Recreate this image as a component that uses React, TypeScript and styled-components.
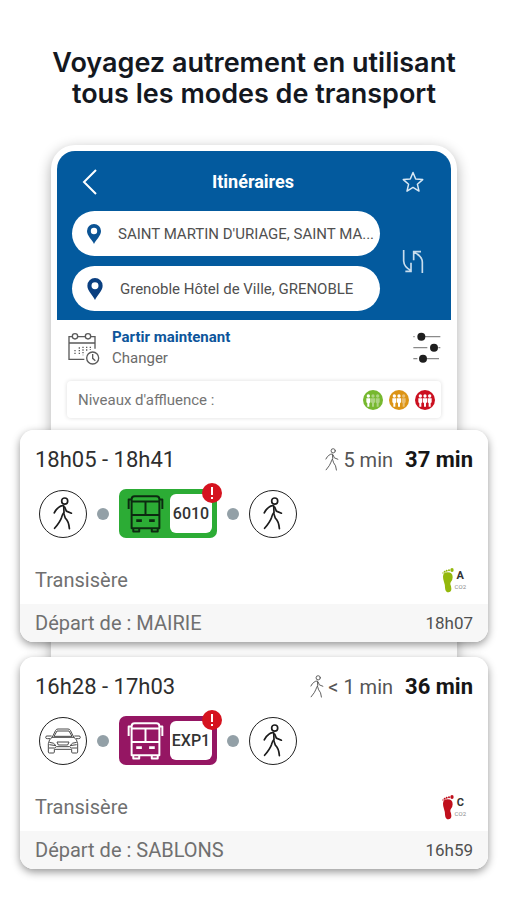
import React from "react";
import styled, { createGlobalStyle } from "styled-components";

const GlobalStyle = createGlobalStyle`
  *, *::before, *::after { box-sizing: border-box; }
  body {
    margin: 0;
    background: #fff;
    font-family: Roboto, "Liberation Sans", sans-serif;
    color: #222;
  }
  h1, h2, p, ul, ol { margin: 0; padding: 0; }
  ul, ol { list-style: none; }
  button { font: inherit; border: 0; background: none; padding: 0; cursor: pointer; }
  svg { display: block; flex: none; }
`;

const Page = styled.main`
  padding: 47px 18px 30px 20px;
`;

const Headline = styled.h1`
  font: 600 27px/31px Inter, "Liberation Sans", sans-serif;
  color: #14181f;
  text-align: center;
  text-wrap: balance;
`;

const Phone = styled.section`
  margin: 36px 31px 0;
  padding: 6px 6px 340px;
  border-radius: 24px;
  background: #fff;
  box-shadow: 0 4px 14px rgba(0, 0, 0, 0.32);
`;

const SearchHeader = styled.header`
  padding: 10px 27px 9px 15px;
  border-radius: 18px 18px 0 0;
  background: #035a9e;
  color: #fff;
`;

const TitleBar = styled.div`
  display: flex;
  align-items: center;
  justify-content: space-between;
  height: 42px;
  padding-left: 10px;
`;

const ScreenTitle = styled.h2`
  font-size: 18px;
  font-weight: 700;
  line-height: 24px;
`;

const IconButton = styled.button`
  display: flex;
  min-width: 22px;
  color: #fff;
`;

const SearchRow = styled.div`
  display: flex;
  align-items: center;
  gap: 22px;
  margin-top: 8px;
`;

const Fields = styled.div`
  flex: 1;
  min-width: 0;
  display: grid;
  gap: 10px;
`;

const Field = styled.label`
  display: flex;
  align-items: center;
  gap: 16px;
  height: 45px;
  padding: 0 2px 0 14px;
  border-radius: 23px;
  background: #fff;
`;

const FieldInput = styled.input`
  flex: 1;
  min-width: 0;
  padding: 0;
  border: 0;
  outline: 0;
  background: none;
  font: 400 15px/24px Roboto, "Liberation Sans", sans-serif;
  color: #505050;
  text-overflow: ellipsis;
`;

const OptionsRow = styled.div`
  display: flex;
  align-items: center;
  justify-content: space-between;
  padding: 7px 10px 0 11px;
`;

const DepartureButton = styled.button`
  display: flex;
  align-items: center;
  gap: 12px;
  text-align: left;
`;

const DepartureText = styled.span`
  display: grid;
  font-size: 15px;
  line-height: 21px;
  color: #6a6a6a;

  strong { color: #0d559b; font-weight: 700; }
`;

const CrowdBox = styled.div`
  display: flex;
  align-items: center;
  justify-content: space-between;
  height: 37px;
  margin: 12px 10px 0;
  padding: 0 6px 0 11px;
  border-radius: 4px;
  box-shadow: 0 0 4px rgba(0, 0, 0, 0.14);
  font-size: 15px;
  color: #747474;
`;

const CrowdLevels = styled.ul`
  display: flex;
  gap: 6px;
`;

const Results = styled.section`
  display: grid;
  gap: 15px;
  margin-top: -328px;
`;

const Card = styled.article`
  position: relative;
  border-radius: 14px;
  overflow: hidden;
  background: #fff;
`;

const CardShadow = styled.div`
  border-radius: 14px;
  box-shadow: 0 3px 9px rgba(0, 0, 0, 0.42);
`;

const CardHead = styled.div`
  display: flex;
  align-items: center;
  justify-content: space-between;
  height: 59px;
  padding: 0 15px;
  font-size: 22px;
  color: #2e2e2e;
`;

const Durations = styled.div`
  display: flex;
  align-items: center;
  gap: 4px;
  font-size: 20px;
  color: #555;
`;

const Total = styled.strong`
  margin-left: 8px;
  font-size: 22px;
  font-weight: 700;
  color: #161616;
`;

const Steps = styled.ol`
  display: flex;
  align-items: center;
  gap: 10px;
  padding: 0 19px;
`;

const ModeCircle = styled.li`
  display: grid;
  place-items: center;
  width: 48px;
  height: 48px;
  border: 1px solid #222;
  border-radius: 50%;
  color: #1c1c1c;
`;

const Dot = styled.li`
  width: 12px;
  height: 12px;
  border-radius: 50%;
  background: #93a0a7;
`;

const LineBadge = styled.li<{ $color: string; $ink: string }>`
  position: relative;
  display: flex;
  align-items: center;
  justify-content: space-between;
  width: 98px;
  height: 49px;
  padding: 5px 5px 5px 8px;
  border-radius: 7px;
  background: ${(p) => p.$color};
  color: ${(p) => p.$ink};
`;

const LineNumber = styled.span`
  display: grid;
  place-items: center;
  width: 42px;
  height: 39px;
  border-radius: 6px;
  background: #fff;
  font-size: 16px;
  font-weight: 500;
  color: #333;
`;

const AlertMark = styled.svg`
  position: absolute;
  top: -6px;
  right: -5px;
`;

const OperatorRow = styled.div`
  display: flex;
  align-items: center;
  justify-content: space-between;
  height: 66px;
  padding: 18px 22px 0 15px;
  font-size: 20px;
  color: #707070;
`;

const Footprint = styled.div`
  display: flex;
  align-items: center;
  gap: 1px;
`;

const Grade = styled.span`
  display: grid;
  justify-items: center;
  font-size: 11px;
  font-weight: 700;
  line-height: 14px;
  color: #333;

  small { font-size: 6px; font-weight: 400; line-height: 8px; color: #8a8a8a; }
`;

const CardFoot = styled.div`
  display: flex;
  align-items: center;
  justify-content: space-between;
  height: 38px;
  padding: 0 15px;
  background: #f7f7f7;
  font-size: 20px;
  color: #707070;

  time { font-size: 17px; color: #505050; }
`;

function BackIcon() {
  return (
    <svg width="16" height="26" viewBox="0 0 16 26" fill="none" stroke="currentColor" strokeWidth="2">
      <path d="M14 1 2 13l12 12" />
    </svg>
  );
}

function StarIcon() {
  return (
    <svg width="22" height="22" viewBox="0 0 22 22" fill="none" stroke="#d9e8f4" strokeWidth="1.5" strokeLinejoin="round">
      <path d="M11 1.5 13.7 8l7 .6-5.3 4.6 1.6 6.9-6-3.7-6 3.7 1.6-6.9L1.3 8.6l7-.6Z" />
    </svg>
  );
}

function SwapIcon() {
  return (
    <svg width="22" height="25" viewBox="0 0 66 75" fill="none" stroke="#c9dded" strokeWidth="5">
      <path d="M5 3v33q1 19 23 29M27 41v26H10" />
      <path d="M61 72V39Q60 20 35 10M35 34V8h22" />
    </svg>
  );
}

function PinIcon({ size, color }: { size: number; color: string }) {
  return (
    <svg width={size} height={size + 6} viewBox="0 0 16 22">
      <path
        fill={color}
        fillRule="evenodd"
        d="M8 1a7 7 0 0 0-7 7c0 5 5 8.500 7 13 2-4.500 7-8 7-13a7 7 0 0 0-7-7Zm0 3.800a3.200 3.200 0 1 1 0 6.400 3.200 3.200 0 0 1 0-6.400Z"
      />
    </svg>
  );
}

function CalendarIcon() {
  return (
    <svg width="32" height="33" viewBox="0 0 96 99" fill="none" stroke="#5a5a5a" strokeWidth="4">
      <path d="M13 14H3v68h46M29 14h24M67 14h14v36M3 33h78" />
      <circle cx="21" cy="13" r="8" />
      <circle cx="60" cy="13" r="8" />
      <path strokeDasharray="4 4" d="M34 46v24M45 44v26M56 44v16M67 44v10M21 54v16" />
      <circle cx="74" cy="78" r="18" />
      <path d="M74 66v13l8 7" />
    </svg>
  );
}

function SlidersIcon() {
  return (
    <svg width="28" height="32" viewBox="0 0 84 96" stroke="#8a8a8a" strokeWidth="4">
      <path d="M1 14h4M34 14h48M1 47h42M76 47h6M1 80h12M40 80h38" />
      <g fill="#1e1e1e" stroke="none">
        <circle cx="25" cy="14" r="12" />
        <circle cx="63" cy="47" r="12" />
        <circle cx="30" cy="80" r="12" />
      </g>
    </svg>
  );
}

function CrowdIcon({ color, filled, label }: { color: string; filled: number; label: string }) {
  return (
    <svg width="20" height="20" viewBox="0 0 60 60" role="img" aria-label={label}>
      <circle cx="30" cy="30" r="30" fill={color} />
      {[16, 30, 44].map((x, i) => (
        <g key={x} fill="#fff" opacity={i < filled ? 1 : 0.4}>
          <circle cx={x} cy="18" r="5" />
          <path d={`M${x - 6} 25h12v12l-3 3v10h-6V40l-3-3Z`} />
        </g>
      ))}
    </svg>
  );
}

function WalkIcon({ height, weight = 5 }: { height: number; weight?: number }) {
  return (
    <svg
      width={Math.round(height * 0.6)}
      height={height}
      viewBox="0 0 58 98"
      fill="none"
      stroke="currentColor"
      strokeWidth={weight}
      strokeLinecap="round"
      strokeLinejoin="round"
    >
      <circle cx="34" cy="12" r="9" />
      <path d="M3 47q5-11 13-16 8-7 15-5l1 20q-6 6-7 14-4 13-21 33" />
      <path d="m34 30 5 12 15 6M31 48l5 15q10 9 12 31" />
    </svg>
  );
}

function BusIcon() {
  return (
    <svg width="37" height="38" viewBox="0 0 112 114" fill="none" stroke="currentColor" strokeWidth="6" strokeLinejoin="round">
      <path d="M14 100V12q0-9 9-9h66q9 0 9 9v88Z" />
      <path d="M14 19h84M14 60h84M56 19v41M14 13H5v29M98 13h9v29" />
      <path d="M19 100v10h18v-10M75 100v10h18v-10" />
      <path strokeWidth="8" d="M28 77h17M67 77h17" />
    </svg>
  );
}

function CarIcon() {
  return (
    <svg width="36" height="26" viewBox="0 0 108 78" fill="none" stroke="#4a4a4a" strokeWidth="3" strokeLinejoin="round">
      <path d="M22 27 32 7q2-4 7-4h30q5 0 7 4l10 20M27 25l9-16h36l9 16ZM20 28h68" />
      <path d="M22 27q-11 8-12 20v25q0 3 3 3h12q3 0 3-3v-8h52v8q0 3 3 3h12q3 0 3-3V47q-1-12-12-20" />
      <path d="M20 24H6q-4 0-4 4t5 4h8M88 24h14q4 0 4 4t-5 4h-8" />
      <path d="M13 43q14 0 20 10l-20-3M95 43q-14 0-20 10l20-3M36 42h36l-4 9H40ZM12 60h17l5-4h40l5 4h17" />
    </svg>
  );
}

function FootIcon({ color }: { color: string }) {
  return (
    <svg width="12" height="25" viewBox="0 0 36 75" fill={color}>
      <path d="M3 26q0-13 14-13 15 0 15 15 0 9-6 15-3 5 1 12 4 17-7 18-10 0-11-14 0-9-3-17-3-8-3-16Z" />
      <ellipse cx="30" cy="6" rx="5" ry="6" />
      <circle cx="21" cy="7" r="3" />
      <circle cx="14" cy="8" r="3" />
      <circle cx="8" cy="11" r="3" />
      <circle cx="3" cy="15" r="2" />
    </svg>
  );
}

type Trip = {
  start: string;
  end: string;
  walk: string;
  total: string;
  firstMode: "walk" | "car";
  line: string;
  color: string;
  ink: string;
  grade: string;
  gradeColor: string;
  stop: string;
  departure: string;
};

const trips: Trip[] = [
  {
    start: "18h05", end: "18h41", walk: "5 min", total: "37 min", firstMode: "walk",
    line: "6010", color: "#2cac35", ink: "#0c2a10", grade: "A", gradeColor: "#94b80c",
    stop: "MAIRIE", departure: "18h07",
  },
  {
    start: "16h28", end: "17h03", walk: "< 1 min", total: "36 min", firstMode: "car",
    line: "EXP1", color: "#951663", ink: "#fff", grade: "C", gradeColor: "#c00f1c",
    stop: "SABLONS", departure: "16h59",
  },
];

function TripCard({ trip }: { trip: Trip }) {
  return (
    <CardShadow>
      <Card>
        <CardHead>
          <span>{trip.start} - {trip.end}</span>
          <Durations>
            <WalkIcon height={23} weight={4} />
            <span>{trip.walk}</span>
            <Total>{trip.total}</Total>
          </Durations>
        </CardHead>
        <Steps>
          <ModeCircle>{trip.firstMode === "walk" ? <WalkIcon height={33} /> : <CarIcon />}</ModeCircle>
          <Dot />
          <LineBadge $color={trip.color} $ink={trip.ink}>
            <BusIcon />
            <LineNumber>{trip.line}</LineNumber>
            <AlertMark width="20" height="20" viewBox="0 0 20 20" role="img" aria-label="Perturbation">
              <circle cx="10" cy="10" r="10" fill="#d5131f" />
              <path d="M10 4v8M10 14v2" stroke="#fff" strokeWidth="2" />
            </AlertMark>
          </LineBadge>
          <Dot />
          <ModeCircle><WalkIcon height={33} /></ModeCircle>
        </Steps>
        <OperatorRow>
          <span>Transisère</span>
          <Footprint>
            <FootIcon color={trip.gradeColor} />
            <Grade><span>{trip.grade}</span><small>CO2</small></Grade>
          </Footprint>
        </OperatorRow>
        <CardFoot>
          <span>Départ de : {trip.stop}</span>
          <time>{trip.departure}</time>
        </CardFoot>
      </Card>
    </CardShadow>
  );
}

export default function App() {
  return (
    <>
      <GlobalStyle />
      <Page>
        <Headline>Voyagez autrement en utilisant tous les modes de transport</Headline>
        <Phone>
          <SearchHeader>
            <TitleBar>
              <IconButton aria-label="Retour"><BackIcon /></IconButton>
              <ScreenTitle>Itinéraires</ScreenTitle>
              <IconButton aria-label="Ajouter aux favoris"><StarIcon /></IconButton>
            </TitleBar>
            <SearchRow>
              <Fields>
                <Field>
                  <PinIcon size={16} color="#0b5394" />
                  <FieldInput aria-label="Départ" defaultValue="SAINT MARTIN D'URIAGE, SAINT MA..." />
                </Field>
                <Field>
                  <PinIcon size={18} color="#0a3f80" />
                  <FieldInput aria-label="Arrivée" defaultValue="Grenoble Hôtel de Ville, GRENOBLE" />
                </Field>
              </Fields>
              <IconButton aria-label="Inverser le trajet"><SwapIcon /></IconButton>
            </SearchRow>
          </SearchHeader>
          <OptionsRow>
            <DepartureButton>
              <CalendarIcon />
              <DepartureText>
                <strong>Partir maintenant</strong>
                <span>Changer</span>
              </DepartureText>
            </DepartureButton>
            <IconButton aria-label="Options"><SlidersIcon /></IconButton>
          </OptionsRow>
          <CrowdBox>
            <span>Niveaux d'affluence :</span>
            <CrowdLevels>
              <li><CrowdIcon color="#76b82f" filled={1} label="Faible" /></li>
              <li><CrowdIcon color="#dc9415" filled={2} label="Moyenne" /></li>
              <li><CrowdIcon color="#cb1020" filled={3} label="Forte" /></li>
            </CrowdLevels>
          </CrowdBox>
        </Phone>
        <Results>
          {trips.map((trip) => <TripCard key={trip.start} trip={trip} />)}
        </Results>
      </Page>
    </>
  );
}
